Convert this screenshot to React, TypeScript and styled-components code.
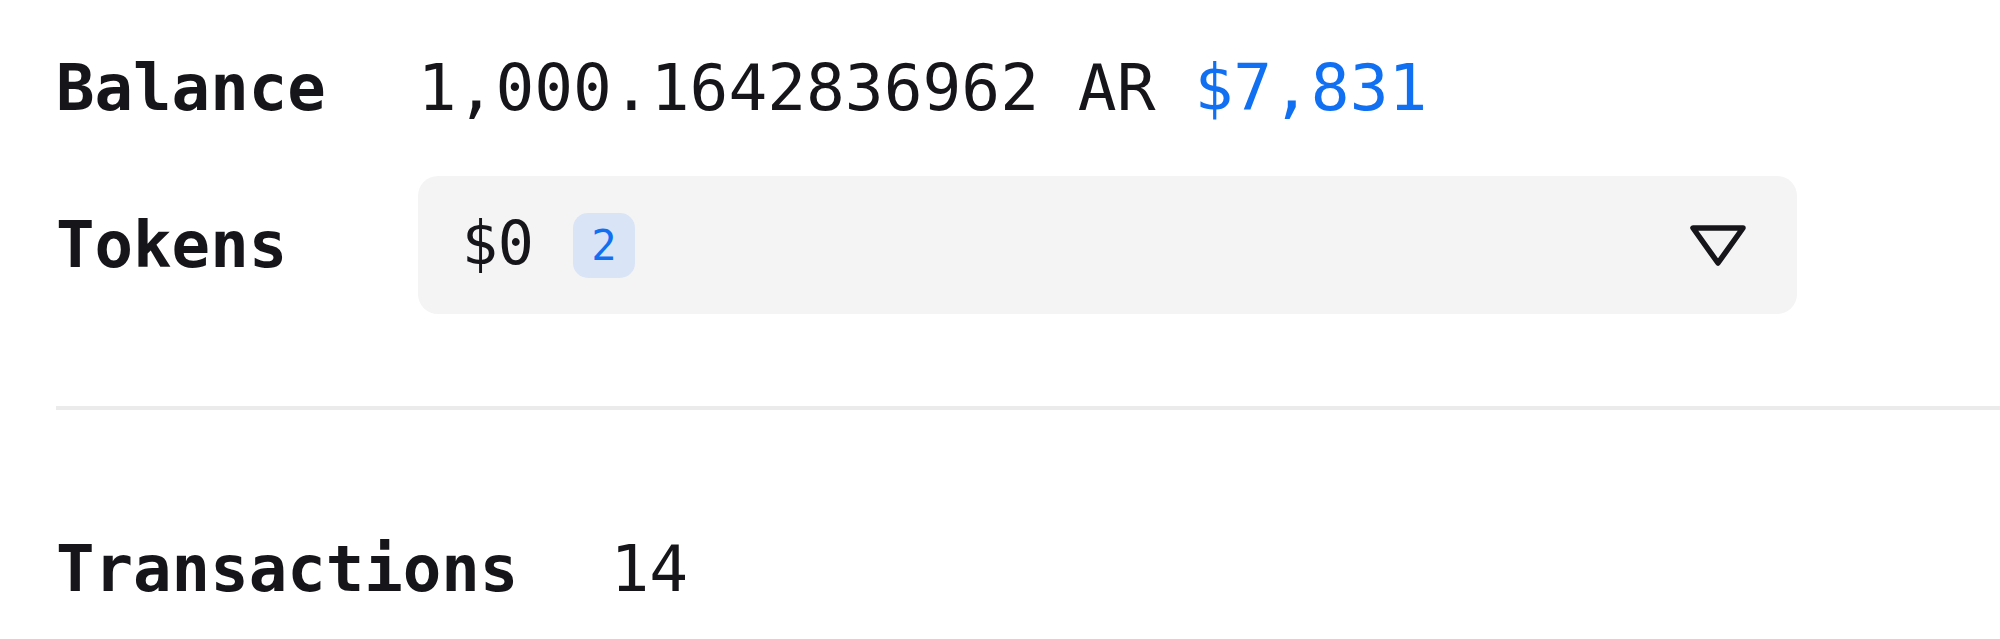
import React from 'react';
import styled, { createGlobalStyle } from 'styled-components';

const GlobalStyle = createGlobalStyle`
  html, body {
    margin: 0;
    padding: 0;
    background: #ffffff;
  }
  body {
    font-family: 'DejaVu Sans Mono', 'Liberation Mono', monospace;
    color: #16161a;
    overflow: hidden;
  }
`;

const Page = styled.div`
  padding: 48px 0 0 56px;
  width: 1944px;
  box-sizing: border-box;
`;

const InfoGrid = styled.div<{ rowGap?: number }>`
  display: grid;
  grid-template-columns: max-content 1fr;
  column-gap: 92px;
  row-gap: ${({ rowGap }) => rowGap ?? 0}px;
  align-items: center;
`;

const Label = styled.div`
  font-size: 64px;
  font-weight: 700;
  line-height: 80px;
  white-space: nowrap;
`;

const Value = styled.div`
  font-size: 64.5px;
  line-height: 80px;
  white-space: nowrap;
`;

const Fiat = styled.span`
  color: #1170f2;
`;

const TokenSelect = styled.div`
  width: 1379px;
  height: 138px;
  box-sizing: border-box;
  display: flex;
  align-items: center;
  padding: 0 50px 0 44px;
  background: #f4f4f4;
  border-radius: 20px;
`;

const TokenTotal = styled.span`
  font-size: 60px;
  line-height: 80px;
  margin-top: -4px;
`;

const CountBadge = styled.span`
  display: inline-flex;
  align-items: center;
  justify-content: center;
  width: 62px;
  height: 65px;
  margin-left: 39px;
  border-radius: 15px;
  background: #d9e4f7;
  color: #1170f2;
  font-size: 42px;
`;

const Caret = styled.svg`
  margin-left: auto;
  width: 58px;
  height: 43px;
`;

const Divider = styled.hr`
  border: 0;
  height: 4px;
  margin: 92px 0 0 0;
  width: 2000px;
  background: #ebebeb;
`;

const Transactions = styled(InfoGrid)`
  margin-top: 119px;
`;

const App: React.FC = () => {
  return (
    <>
      <GlobalStyle />
      <Page>
        <InfoGrid rowGap={48}>
          <Label>Balance</Label>
          <Value>
            1,000.1642836962 AR <Fiat>$7,831</Fiat>
          </Value>
          <Label>Tokens</Label>
          <TokenSelect>
            <TokenTotal>$0</TokenTotal>
            <CountBadge>2</CountBadge>
            <Caret viewBox="0 0 58 43">
              <polygon
                points="4,4 54,4 29,39"
                fill="none"
                stroke="#16161a"
                strokeWidth={5.5}
                strokeLinejoin="round"
              />
            </Caret>
          </TokenSelect>
        </InfoGrid>
        <Divider />
        <Transactions>
          <Label>Transactions</Label>
          <Value>14</Value>
        </Transactions>
      </Page>
    </>
  );
};

export default App;
